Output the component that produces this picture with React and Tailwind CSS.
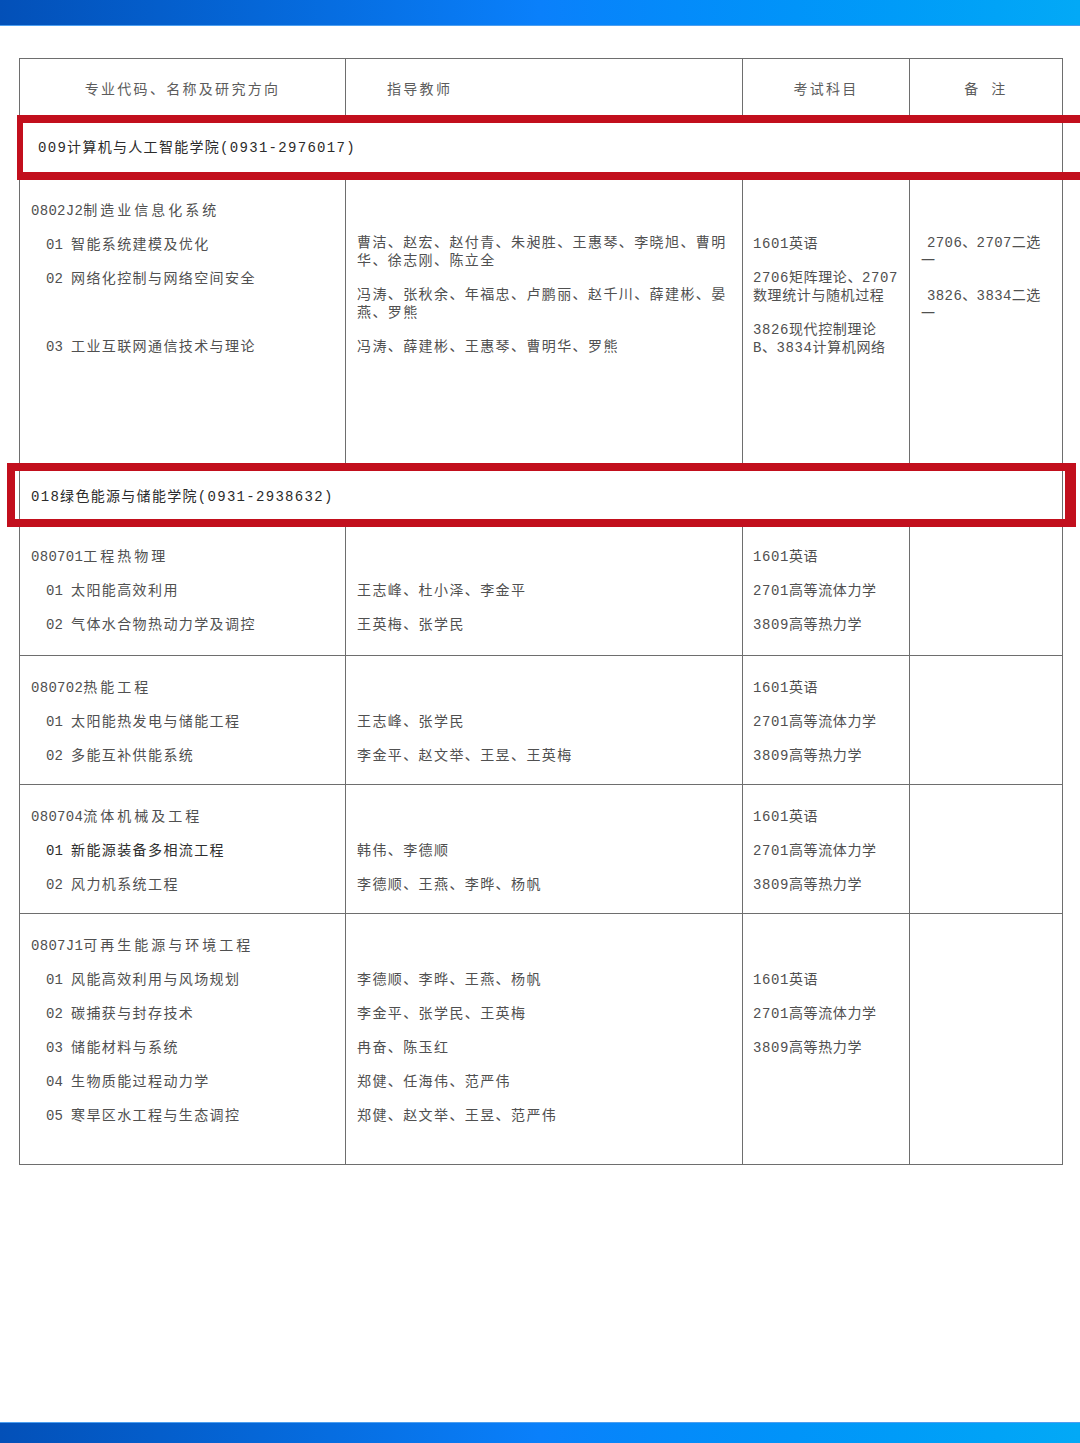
import React from 'react';

const section1 = {
  code: '0802J2',
  name: '制造业信息化系统',
  items: [['01', '智能系统建模及优化'], ['02', '网络化控制与网络空间安全'], null, ['03', '工业互联网通信技术与理论']],
  teachers: [
    ['曹洁、赵宏、赵付青、朱昶胜、王惠琴、李晓旭、曹明', '华、徐志刚、陈立全'],
    ['冯涛、张秋余、年福忠、卢鹏丽、赵千川、薛建彬、晏', '燕、罗熊'],
    ['冯涛、薛建彬、王惠琴、曹明华、罗熊'],
  ],
  exams: [['1601英语'], ['2706矩阵理论、2707', '数理统计与随机过程'], ['3826现代控制理论', 'B、3834计算机网络']],
  notes: [['2706、2707二选', '一'], ['3826、3834二选', '一']],
};

const majors = [
  {
    code: '080701',
    name: '工程热物理',
    h: 'h-[131px]',
    offset: 0,
    items: [
      ['01', '太阳能高效利用', '王志峰、杜小泽、李金平'],
      ['02', '气体水合物热动力学及调控', '王英梅、张学民'],
    ],
  },
  {
    code: '080702',
    name: '热能工程',
    h: 'h-[129px]',
    offset: 0,
    items: [
      ['01', '太阳能热发电与储能工程', '王志峰、张学民'],
      ['02', '多能互补供能系统', '李金平、赵文举、王昱、王英梅'],
    ],
  },
  {
    code: '080704',
    name: '流体机械及工程',
    h: 'h-[129px]',
    offset: 0,
    items: [
      ['01', '新能源装备多相流工程', '韩伟、李德顺', true],
      ['02', '风力机系统工程', '李德顺、王燕、李晔、杨帆'],
    ],
  },
  {
    code: '0807J1',
    name: '可再生能源与环境工程',
    h: 'h-[251px]',
    offset: 1,
    items: [
      ['01', '风能高效利用与风场规划', '李德顺、李晔、王燕、杨帆'],
      ['02', '碳捕获与封存技术', '李金平、张学民、王英梅'],
      ['03', '储能材料与系统', '冉奋、陈玉红'],
      ['04', '生物质能过程动力学', '郑健、任海伟、范严伟'],
      ['05', '寒旱区水工程与生态调控', '郑健、赵文举、王昱、范严伟'],
    ],
  },
];

const exams = ['1601英语', '2701高等流体力学', '3809高等热力学'];

const cell = 'border border-[#6e6e6e]';

function Title({ code, name }) {
  return (
    <div className="h-[34px] leading-[34px] whitespace-nowrap">
      <span className="tracking-[0.3px]">{code}</span>
      <span className="tracking-[3px]">{name}</span>
    </div>
  );
}

function Item({ code, name, dark }) {
  return (
    <div className={`h-[34px] leading-[34px] pl-[15px] flex whitespace-nowrap ${dark ? 'text-[#2e2e2e]' : ''}`}>
      <span className="w-[25px] shrink-0">{code}</span>
      <span className="tracking-[1.4px]">{name}</span>
    </div>
  );
}

function College({ children, h, pl }) {
  return (
    <tr>
      <td colSpan={4} className={`${cell} ${h} ${pl} align-middle text-[#2b2b2b] tracking-[1.3px] whitespace-nowrap`}>
        {children}
      </td>
    </tr>
  );
}

export default function App() {
  return (
    <div className="relative w-[1080px] h-[1443px] bg-white overflow-hidden flex flex-col text-[14px] text-[#505050] font-['Liberation_Mono','Noto_Sans_CJK_SC',monospace]">
      <div className="h-[26px] shrink-0 bg-linear-to-r from-[#0350b8] via-[#0a80fb] to-[#03a9f6] border-b border-[#4d9ff0]" />

      <div className="flex-1 pt-[32px] pl-[19px]">
        <table className="table-fixed border-collapse w-[1043px]">
          <colgroup>
            <col className="w-[326px]" />
            <col className="w-[397px]" />
            <col className="w-[167px]" />
            <col className="w-[153px]" />
          </colgroup>
          <tbody>
            <tr className="text-[#5c5c5c]">
              <td className={`${cell} h-[58px] align-middle text-center pt-[5px] tracking-[2.3px]`}>专业代码、名称及研究方向</td>
              <td className={`${cell} align-middle pl-[41px] pt-[5px] tracking-[2.3px]`}>指导教师</td>
              <td className={`${cell} align-middle text-center pt-[5px] tracking-[2.3px]`}>考试科目</td>
              <td className={`${cell} align-middle text-center pt-[5px] tracking-[2.3px]`}>备 注</td>
            </tr>

            <College h="h-[62px]" pl="pl-[18px] pt-[2px]">009计算机与人工智能学院(0931-2976017)</College>

            <tr>
              <td className={`${cell} align-top h-[285px] pl-[11px] pt-[15px]`}>
                <Title code={section1.code} name={section1.name} />
                {section1.items.map((it, i) =>
                  it ? <Item key={i} code={it[0]} name={it[1]} /> : <div key={i} className="h-[34px]" />
                )}
              </td>
              <td className={`${cell} align-top pl-[11px] pt-[55px] tracking-[1.4px]`}>
                <div className="flex flex-col gap-[16px]">
                  {section1.teachers.map((b, i) => (
                    <div key={i} className="leading-[18px] whitespace-nowrap">
                      {b.map((l) => (
                        <div key={l}>{l}</div>
                      ))}
                    </div>
                  ))}
                </div>
              </td>
              <td className={`${cell} align-top pl-[10px] pt-[56px] tracking-[0.6px]`}>
                <div className="flex flex-col gap-[16px]">
                  {section1.exams.map((b, i) => (
                    <div key={i} className="leading-[18px] whitespace-nowrap">
                      {b.map((l) => (
                        <div key={l}>{l}</div>
                      ))}
                    </div>
                  ))}
                </div>
              </td>
              <td className={`${cell} align-top pl-[11px] pt-[55px] tracking-[0.4px]`}>
                <div className="flex flex-col gap-[17px]">
                  {section1.notes.map((b, i) => (
                    <div key={i} className="leading-[18px] whitespace-nowrap">
                      <div className="pl-[6px]">{b[0]}</div>
                      <div>{b[1]}</div>
                    </div>
                  ))}
                </div>
              </td>
            </tr>

            <College h="h-[61px]" pl="pl-[11px] pt-[6px]">018绿色能源与储能学院(0931-2938632)</College>

            {majors.map((m) => (
              <tr key={m.code}>
                <td className={`${cell} align-top ${m.h} pl-[11px] pt-[15px]`}>
                  <Title code={m.code} name={m.name} />
                  {m.items.map((it) => (
                    <Item key={it[0]} code={it[0]} name={it[1]} dark={it[3]} />
                  ))}
                </td>
                <td className={`${cell} align-top pl-[11px] pt-[15px] tracking-[1.4px]`}>
                  <div className="h-[34px]" />
                  {m.items.map((it) => (
                    <div key={it[0]} className="h-[34px] leading-[34px] whitespace-nowrap">
                      {it[2]}
                    </div>
                  ))}
                </td>
                <td className={`${cell} align-top pl-[10px] pt-[15px] tracking-[0.6px]`}>
                  {m.offset > 0 && <div className="h-[34px]" />}
                  {exams.map((e) => (
                    <div key={e} className="h-[34px] leading-[34px] whitespace-nowrap">
                      {e}
                    </div>
                  ))}
                </td>
                <td className={cell} />
              </tr>
            ))}
          </tbody>
        </table>
      </div>

      <div className="h-[21px] shrink-0 bg-linear-to-r from-[#0350b8] via-[#0a80fb] to-[#03a9f6] border-t border-[#4d9ff0]" />

      {/* red highlight frames */}
      <div className="absolute left-[17px] top-[115px] w-[1080px] h-[65px] border-x-[6px] border-y-[8px] border-[#c20f1d]" />
      <div className="absolute left-[7px] top-[463px] w-[1069px] h-[64px] border-[8px] border-r-[11px] border-[#c20f1d]" />
    </div>
  );
}
